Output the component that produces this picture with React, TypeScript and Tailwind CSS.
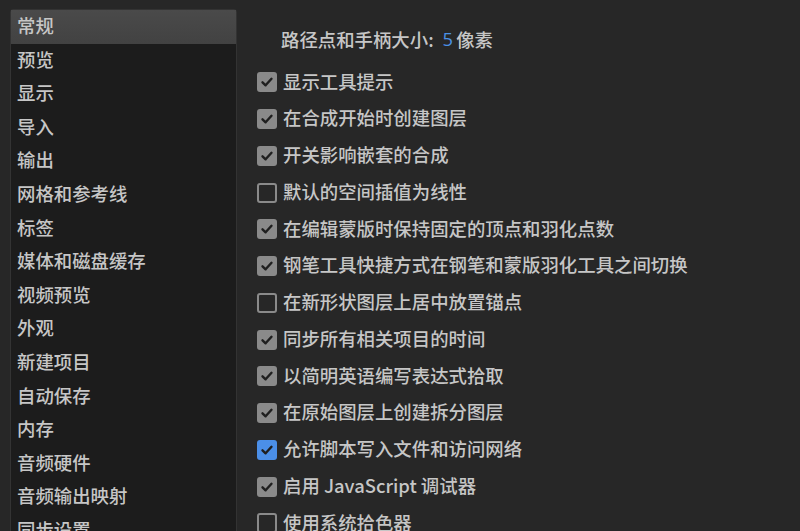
import React from "react";

const sideItems = [
  "常规",
  "预览",
  "显示",
  "导入",
  "输出",
  "网格和参考线",
  "标签",
  "媒体和磁盘缓存",
  "视频预览",
  "外观",
  "新建项目",
  "自动保存",
  "内存",
  "音频硬件",
  "音频输出映射",
  "同步设置",
];

type Opt = { label: string; state: "on" | "off" | "blue" };

const options: Opt[] = [
  { label: "显示工具提示", state: "on" },
  { label: "在合成开始时创建图层", state: "on" },
  { label: "开关影响嵌套的合成", state: "on" },
  { label: "默认的空间插值为线性", state: "off" },
  { label: "在编辑蒙版时保持固定的顶点和羽化点数", state: "on" },
  { label: "钢笔工具快捷方式在钢笔和蒙版羽化工具之间切换", state: "on" },
  { label: "在新形状图层上居中放置锚点", state: "off" },
  { label: "同步所有相关项目的时间", state: "on" },
  { label: "以简明英语编写表达式拾取", state: "on" },
  { label: "在原始图层上创建拆分图层", state: "on" },
  { label: "允许脚本写入文件和访问网络", state: "blue" },
  { label: "启用 JavaScript 调试器", state: "on" },
  { label: "使用系统拾色器", state: "off" },
];

function Check({ state }: { state: Opt["state"] }) {
  if (state === "off") {
    return (
      <div className="w-[20px] h-[20px] rounded-[3px] border-2 border-[#8a8a8a] shrink-0" />
    );
  }
  const bg = state === "blue" ? "bg-[#4b8fe8]" : "bg-[#8a8a8a]";
  return (
    <div className={`w-[20px] h-[20px] rounded-[3px] ${bg} shrink-0 flex items-center justify-center`}>
      <svg width="14" height="14" viewBox="0 0 14 14">
        <path d="M2.5 7.3 L5.6 10.3 L11.5 3.8" fill="none" stroke="#1f1f1f" strokeWidth="2.4" strokeLinecap="round" strokeLinejoin="round" />
      </svg>
    </div>
  );
}

export default function App() {
  return (
    <div
      className="w-[800px] h-[531px] overflow-hidden bg-[#272727] flex text-[#c6c6c6] text-[18.4px] font-medium"
      style={{ fontFamily: '"Noto Sans CJK SC", "Noto Sans", sans-serif' }}
    >
      <div className="ml-[10px] mt-[9px] w-[227px] h-[540px] bg-[#1c1c1c] border border-[#333333] rounded-t-[3px] shrink-0">
        {sideItems.map((s, i) => (
          <div
            key={s}
            className={`h-[33.6px] flex items-center pl-[6px] pb-[3px] leading-none ${
              i === 0 ? "bg-gradient-to-b from-[#4a4a4a] to-[#424242]" : ""
            }`}
          >
            {s}
          </div>
        ))}
      </div>
      <div className="flex-1 pl-[20px]">
        <div className="h-[64px] pt-[27px] pl-[24px] flex items-start leading-[24px]">
          <span>路径点和手柄大小:</span>
          <span className="ml-[9px] text-[#4b91e6]" style={{ fontFamily: '"Open Sans", sans-serif' }}>5</span>
          <span className="ml-[3px]">像素</span>
        </div>
        {options.map((o) => (
          <div key={o.label} className="h-[36.75px] flex items-center">
            <Check state={o.state} />
            <span className="ml-[6px] pb-[3px] leading-none whitespace-nowrap">{o.label}</span>
          </div>
        ))}
      </div>
    </div>
  );
}
